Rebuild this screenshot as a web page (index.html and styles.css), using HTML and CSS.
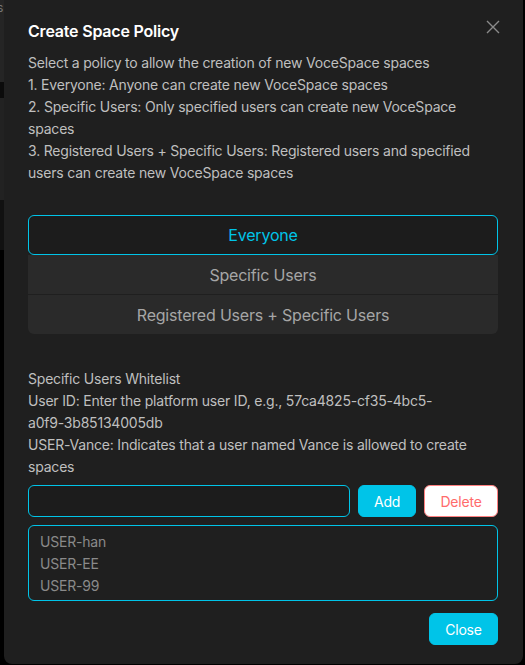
FILE: index.html
```html
<!DOCTYPE html>
<html lang="en">
<head>
  <meta charset="UTF-8">
  <title>Create Space Policy</title>
  <link rel="stylesheet" href="styles.css">
</head>
<body>
  <div class="backdrop">
    <span class="peek">s</span>
  </div>

  <div class="modal">
    <button class="modal-close" aria-label="Close">
      <svg width="14" height="14" viewBox="0 0 14 14">
        <path d="M1 1 L13 13 M13 1 L1 13" stroke="currentColor" stroke-width="1.4" fill="none"/>
      </svg>
    </button>

    <h2 class="modal-title">Create Space Policy</h2>
    <div class="desc">
      <p>Select a policy to allow the creation of new VoceSpace spaces</p>
      <p>1. Everyone: Anyone can create new VoceSpace spaces</p>
      <p>2. Specific Users: Only specified users can create new VoceSpace spaces</p>
      <p>3. Registered Users + Specific Users: Registered users and specified users can create new VoceSpace spaces</p>
    </div>

    <div class="segmented">
      <div class="segment active">Everyone</div>
      <div class="segment">Specific Users</div>
      <div class="segment last">Registered Users + Specific Users</div>
    </div>

    <div class="desc whitelist-info">
      <p>Specific Users Whitelist</p>
      <p>User ID: Enter the platform user ID, e.g., 57ca4825-cf35-4bc5-<span class="nowrap">a0f9-3b85134005db</span></p>
      <p>USER-Vance: Indicates that a user named Vance is allowed to create spaces</p>
    </div>

    <div class="input-row">
      <input type="text" class="user-input">
      <button class="btn btn-primary">Add</button>
      <button class="btn btn-danger">Delete</button>
    </div>

    <div class="user-list">
      <div>USER-han</div>
      <div>USER-EE</div>
      <div>USER-99</div>
    </div>

    <div class="footer">
      <button class="btn btn-primary btn-close">Close</button>
    </div>
  </div>
</body>
</html>
```

FILE: styles.css
```css
* {
  box-sizing: border-box;
}
body {
  margin: 0;
  width: 525px;
  height: 665px;
  overflow: hidden;
  display: flex;
  background: #000;
  font-family: Inter, "Noto Sans", sans-serif;
  letter-spacing: -0.2px;
}
.backdrop {
  width: 4px;
  flex-shrink: 0;
  position: relative;
  background: linear-gradient(to bottom, #252525 0, #252525 82px, #0b0b0b 82px, #0b0b0b 98px, #222 98px, #222 200px, #111 200px, #111 250px, #000 250px);
}
.peek {
  position: absolute;
  top: 0;
  left: -3px;
  font-size: 12px;
  color: #777;
}
.modal {
  position: relative;
  width: 519px;
  height: 664px;
  background: #1f1f1f;
  border-radius: 0 0 8px 8px;
  padding: 19px 25px 0 24px;
  color: #bfbfbf;
}
.modal-close {
  position: absolute;
  top: 20px;
  right: 23px;
  padding: 0;
  border: none;
  background: none;
  color: #8a8a8a;
  line-height: 0;
  cursor: pointer;
}
.modal-title {
  margin: 0;
  font-size: 16px;
  line-height: 24px;
  font-weight: 600;
  color: #fff;
}
.desc {
  margin-top: 9px;
  font-size: 14px;
  line-height: 22px;
}
.desc p {
  margin: 0;
}
.nowrap {
  white-space: nowrap;
}
.segmented {
  margin-top: 31px;
  display: flex;
  flex-direction: column;
  gap: 1px;
}
.segment {
  height: 39px;
  display: flex;
  align-items: center;
  justify-content: center;
  font-size: 16px;
  color: #a6a6a6;
  background: #2a2a2a;
}
.segment.active {
  height: 40px;
  margin-bottom: -1px;
  background: #1c1c1c;
  color: #00c4e8;
  border: 1px solid #00c4e8;
  border-radius: 6px;
}
.segment.last {
  border-radius: 0 0 6px 6px;
}
.whitelist-info {
  margin-top: 34px;
}
.input-row {
  margin-top: 7px;
  display: flex;
  gap: 8px;
}
.user-input {
  flex: 1;
  height: 32px;
  background: #1c1c1c;
  border: 1px solid #00c4e8;
  border-radius: 6px;
  color: #ddd;
  padding: 4px 11px;
  font-size: 14px;
  outline: none;
}
.btn {
  height: 32px;
  border-radius: 6px;
  font-family: inherit;
  font-size: 14px;
  letter-spacing: inherit;
  padding: 0 15px;
  cursor: pointer;
}
.btn-primary {
  background: #00c4e8;
  border: 1px solid #00c4e8;
  color: #fff;
}
.input-row .btn-primary {
  width: 58px;
}
.btn-danger {
  width: 74px;
  background: #fff;
  border: 1px solid #ff8080;
  color: #ff6b6b;
}
.user-list {
  margin-top: 8px;
  height: 76px;
  border: 1px solid #00c4e8;
  border-radius: 6px;
  padding: 5px 11px;
  font-size: 14px;
  line-height: 22px;
  color: #8a8a8a;
}
.footer {
  margin-top: 12px;
  display: flex;
  justify-content: flex-end;
}
.btn-close {
  width: 69px;
}
```
